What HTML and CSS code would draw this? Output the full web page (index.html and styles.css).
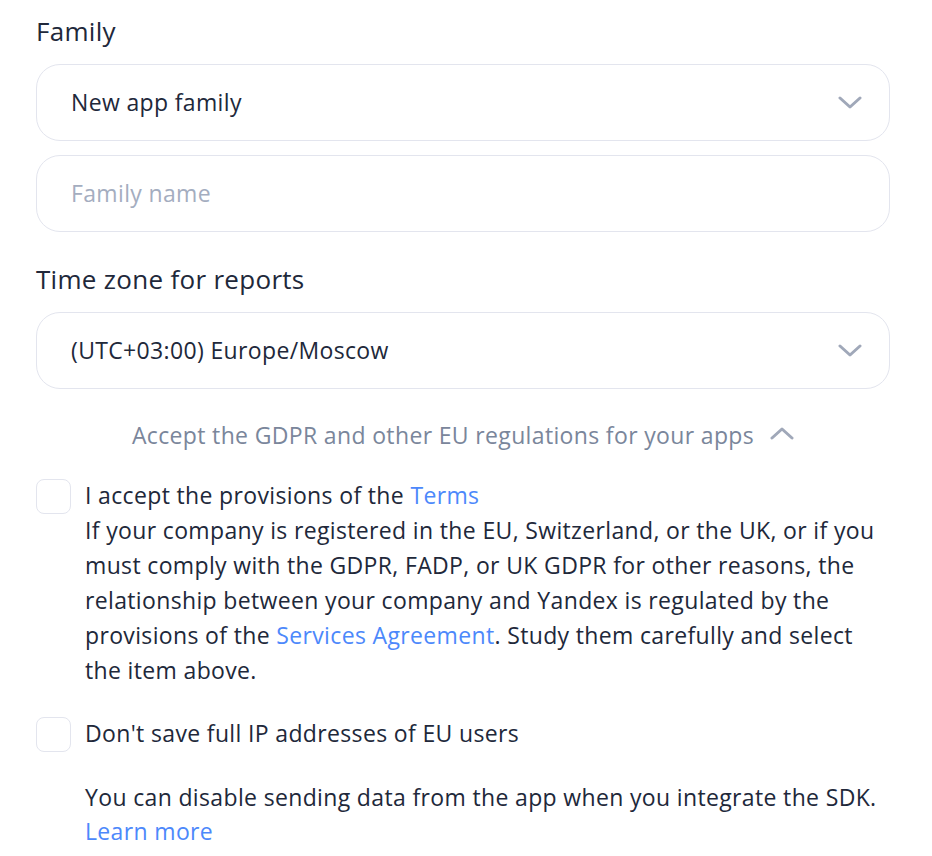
FILE: index.html
```html
<!DOCTYPE html>
<html lang="en">
<head>
<meta charset="utf-8">
<title>App settings</title>
<link rel="stylesheet" href="styles.css">
</head>
<body>
<div class="form">
  <div class="label">Family</div>
  <div class="field select">
    <span class="value">New app family</span>
    <svg class="chev" width="24" height="14" viewBox="0 0 24 14"><path d="M2 2 L12 11 L22 2" fill="none" stroke="#a0a8b9" stroke-width="3" stroke-linecap="round" stroke-linejoin="round"/></svg>
  </div>
  <div class="field input">
    <span class="placeholder">Family name</span>
  </div>

  <div class="label label-2">Time zone for reports</div>
  <div class="field select">
    <span class="value">(UTC+03:00) Europe/Moscow</span>
    <svg class="chev" width="24" height="14" viewBox="0 0 24 14"><path d="M2 2 L12 11 L22 2" fill="none" stroke="#a0a8b9" stroke-width="3" stroke-linecap="round" stroke-linejoin="round"/></svg>
  </div>

  <div class="toggle">
    <span>Accept the GDPR and other EU regulations for your apps</span>
    <svg class="chev-up" width="24" height="14" viewBox="0 0 24 14"><path d="M2 12 L12 3 L22 12" fill="none" stroke="#a0a8b9" stroke-width="3" stroke-linecap="round" stroke-linejoin="round"/></svg>
  </div>

  <div class="check-row first">
    <span class="box"></span>
    <div class="check-text">
      <p class="line">I accept the provisions of the <a class="link" href="#">Terms</a></p>
      <p class="line">If your company is registered in the EU, Switzerland, or the UK, or if you must comply with the GDPR, FADP, or UK GDPR for other reasons, the relationship between your company and Yandex is regulated by the provisions of the <a class="link" href="#">Services Agreement</a>. Study them carefully and select the item above.</p>
    </div>
  </div>

  <div class="check-row second">
    <span class="box"></span>
    <div class="check-text">Don't save full IP addresses of EU users</div>
  </div>

  <div class="note">
    <p class="line">You can disable sending data from the app when you integrate the SDK.</p>
    <p class="line"><a class="link" href="#">Learn more</a></p>
  </div>
</div>
</body>
</html>
```
FILE: styles.css
```css
html, body {
  margin: 0;
  padding: 0;
  background: #ffffff;
}
body {
  font-family: "Open Sans", "Noto Sans", sans-serif;
  color: #21283a;
  font-size: 23px;
  letter-spacing: 0.35px;
  line-height: 35px;
}
.form {
  width: 854px;
  margin-left: 36px;
  padding-top: 13px;
}
.label {
  font-size: 26px;
  letter-spacing: 0.3px;
  line-height: 36px;
  color: #21283a;
}
.label-2 {
  margin-top: 29px;
}
.field {
  box-sizing: border-box;
  height: 77px;
  border: 1px solid #e3e5ee;
  border-radius: 24px;
  margin-top: 15px;
  padding: 0 27px 0 34px;
  display: flex;
  align-items: center;
  justify-content: space-between;
}
.field.input {
  margin-top: 14px;
}
.value {
  color: #21283a;
  margin-top: -1px;
}
.placeholder {
  color: #a4adbf;
  margin-top: -1px;
}
.chev {
  display: block;
}
.toggle {
  margin-top: 28px;
  display: flex;
  align-items: center;
  justify-content: center;
  gap: 16px;
  color: #7a869b;
  line-height: 36px;
}
.chev-up {
  display: block;
  margin-top: -4px;
}
.check-row {
  display: flex;
  align-items: flex-start;
  gap: 14px;
}
.check-row.first {
  margin-top: 25px;
}
.check-row.second {
  margin-top: 28px;
}
.box {
  flex: none;
  box-sizing: border-box;
  width: 35px;
  height: 35px;
  border: 1px solid #e3e5ee;
  border-radius: 8px;
  margin-top: 1px;
}
.check-text {
  flex: 1;
}
.line {
  margin: 0;
}
.link {
  color: #4c88fb;
  text-decoration: none;
}
.note {
  margin-top: 28px;
  padding-left: 49px;
  line-height: 34px;
}
```
